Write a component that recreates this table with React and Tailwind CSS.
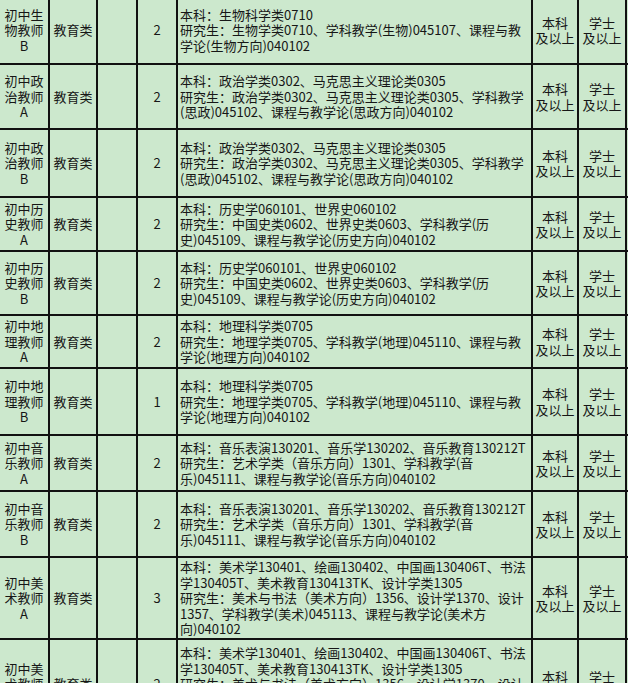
import * as React from 'react';

const rows = [
  {
    post: ['初中生', '物教师', 'B'],
    num: '2',
    major: ['本科：生物科学类0710', '研究生：生物学类0710、学科教学(生物)045107、课程与教', '学论(生物方向)040102'],
  },
  {
    post: ['初中政', '治教师', 'A'],
    num: '2',
    major: ['本科：政治学类0302、马克思主义理论类0305', '研究生：政治学类0302、马克思主义理论类0305、学科教学', '(思政)045102、课程与教学论(思政方向)040102'],
  },
  {
    post: ['初中政', '治教师', 'B'],
    num: '2',
    major: ['本科：政治学类0302、马克思主义理论类0305', '研究生：政治学类0302、马克思主义理论类0305、学科教学', '(思政)045102、课程与教学论(思政方向)040102'],
  },
  {
    post: ['初中历', '史教师', 'A'],
    num: '2',
    major: ['本科：历史学060101、世界史060102', '研究生：中国史类0602、世界史类0603、学科教学(历', '史)045109、课程与教学论(历史方向)040102'],
  },
  {
    post: ['初中历', '史教师', 'B'],
    num: '2',
    major: ['本科：历史学060101、世界史060102', '研究生：中国史类0602、世界史类0603、学科教学(历', '史)045109、课程与教学论(历史方向)040102'],
  },
  {
    post: ['初中地', '理教师', 'A'],
    num: '2',
    major: ['本科：地理科学类0705', '研究生：地理学类0705、学科教学(地理)045110、课程与教', '学论(地理方向)040102'],
  },
  {
    post: ['初中地', '理教师', 'B'],
    num: '1',
    major: ['本科：地理科学类0705', '研究生：地理学类0705、学科教学(地理)045110、课程与教', '学论(地理方向)040102'],
  },
  {
    post: ['初中音', '乐教师', 'A'],
    num: '2',
    major: ['本科：音乐表演130201、音乐学130202、音乐教育130212T', '研究生：艺术学类（音乐方向）1301、学科教学(音', '乐)045111、课程与教学论(音乐方向)040102'],
  },
  {
    post: ['初中音', '乐教师', 'B'],
    num: '2',
    major: ['本科：音乐表演130201、音乐学130202、音乐教育130212T', '研究生：艺术学类（音乐方向）1301、学科教学(音', '乐)045111、课程与教学论(音乐方向)040102'],
  },
  {
    post: ['初中美', '术教师', 'A'],
    num: '3',
    major: [
      '本科：美术学130401、绘画130402、中国画130406T、书法',
      '学130405T、美术教育130413TK、设计学类1305',
      '研究生：美术与书法（美术方向）1356、设计学1370、设计',
      '1357、学科教学(美术)045113、课程与教学论(美术方',
      '向)040102',
    ],
  },
  {
    post: ['初中美', '术教师', 'B'],
    num: '2',
    major: [
      '本科：美术学130401、绘画130402、中国画130406T、书法',
      '学130405T、美术教育130413TK、设计学类1305',
      '研究生：美术与书法（美术方向）1356、设计学1370、设计',
      '1357、学科教学(美术)045113、课程与教学论(美术方',
      '向)040102',
    ],
  },
];

const cell = 'bg-[#cce8cd] flex flex-col justify-center items-center text-center overflow-hidden';

export default function App() {
  return (
    <div className="w-[628px] h-[683px] overflow-hidden bg-[#cce8cd]">
      <div
        className="-mt-[3px] w-[680px] grid grid-cols-[48px_46px_38px_38px_353px_44px_46px_40px] grid-rows-[66px_63px_66px_52px_62px_51px_65px_54px_64px_80px_88px] gap-[2px] bg-[#111] text-[13px] leading-[15.4px] text-[#161616]"
        style={{ fontFamily: '"Noto Sans CJK SC", "Noto Sans", sans-serif' }}
      >
        {rows.map((row, i) => (
          <React.Fragment key={`row-${i}`}>
            <div className={cell}>
              {row.post.map((line, j) => (
                <div key={j}>{line}</div>
              ))}
            </div>
            <div className={cell}>教育类</div>
            <div className={cell}></div>
            <div className={cell}>{row.num}</div>
            <div className="bg-[#cce8cd] flex flex-col justify-center pl-[2px] whitespace-nowrap overflow-hidden">
              {row.major.map((line, j) => (
                <div key={j}>{line}</div>
              ))}
            </div>
            <div className={cell}>
              <div>本科</div>
              <div>及以上</div>
            </div>
            <div className={cell}>
              <div>学士</div>
              <div>及以上</div>
            </div>
            <div className={cell}></div>
          </React.Fragment>
        ))}
      </div>
    </div>
  );
}
